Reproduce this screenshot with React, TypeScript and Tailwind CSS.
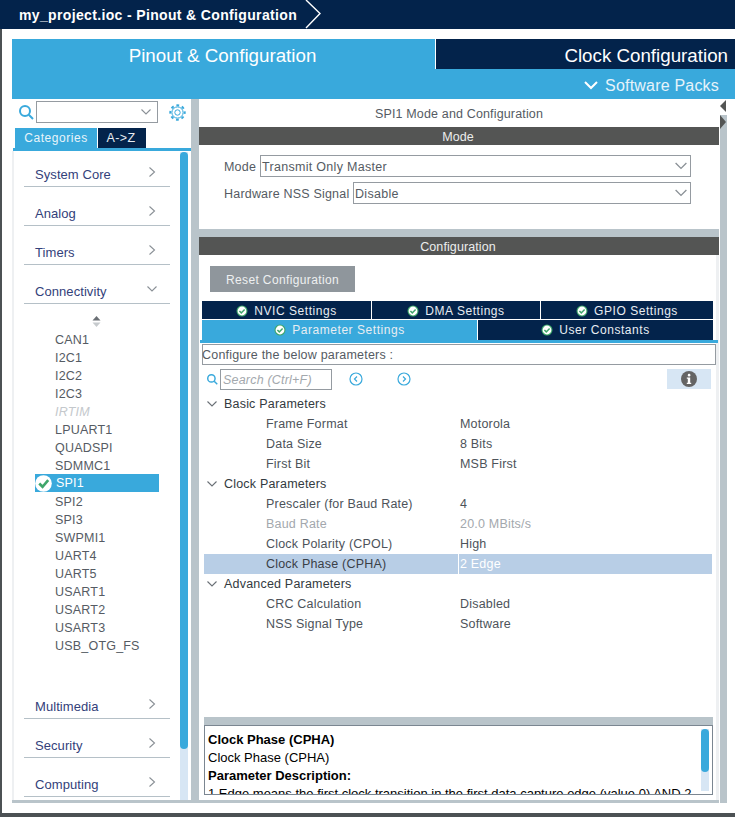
import React from "react";

const Chevron = ({ dir, size = 10, color = "#8a9096", width = 1.1 }: { dir: "right" | "down"; size?: number; color?: string; width?: number }) => (
  <svg width={size} height={size} viewBox="0 0 10 10" fill="none" stroke={color} strokeWidth={width}>
    {dir === "right" ? <path d="M2.5 0.5 L7.5 5 L2.5 9.5" /> : <path d="M0.5 2.5 L5 7 L9.5 2.5" />}
  </svg>
);

const Check = ({ size = 12 }: { size?: number }) => (
  <svg width={size} height={size} viewBox="0 0 12 12" className="shrink-0">
    <circle cx="6" cy="6" r="5.5" fill="#3fa66b" />
    <circle cx="6" cy="6" r="4.4" fill="#ffffff" />
    <path d="M3.4 6 L5.3 7.9 L8.6 4.4" fill="none" stroke="#3fa66b" strokeWidth="1.5" />
  </svg>
);

const BigCheck = () => (
  <svg width="17" height="17" viewBox="0 0 18 18" className="shrink-0">
    <circle cx="9" cy="9" r="8.8" fill="#ffffff" />
    <path d="M4.5 9 L8 12.5 L14 5.5" fill="none" stroke="#3fa66b" strokeWidth="2.8" />
  </svg>
);

const SearchIcon = ({ size = 15, width = 1.8 }: { size?: number; width?: number }) => (
  <svg width={size} height={size} viewBox="0 0 15 15" fill="none" stroke="#39a9dc" strokeWidth={width}>
    <circle cx="6" cy="6" r="5" />
    <path d="M9.8 9.8 L14 14" />
  </svg>
);

const Gear = () => (
  <svg width="17" height="17" viewBox="0 0 17 17" fill="none" stroke="#39a9dc">
    <circle cx="8.5" cy="8.5" r="2.7" strokeWidth="1" />
    <circle cx="8.5" cy="8.5" r="5.6" strokeWidth="1" />
    <circle cx="8.5" cy="8.5" r="7.2" strokeWidth="2" strokeDasharray="2.83 2.83" strokeDashoffset="1.41" />
  </svg>
);

const Category = ({ label, open }: { label: string; open?: boolean }) => (
  <div className="h-[39px] ml-[10px] w-[146px] border-b border-[#b5c0c7] flex items-end justify-between pl-[11px] pr-[13px] pb-[3px] text-[#33417a] text-[13px] tracking-[0.07px] leading-[16px]">
    <span>{label}</span>
    <span className="mb-[6px]">
      <Chevron dir={open ? "down" : "right"} />
    </span>
  </div>
);

const items = ["CAN1", "I2C1", "I2C2", "I2C3", "IRTIM", "LPUART1", "QUADSPI", "SDMMC1", "SPI1", "SPI2", "SPI3", "SWPMI1", "UART4", "UART5", "USART1", "USART2", "USART3", "USB_OTG_FS"];

const Item = ({ label }: { label: string }) => {
  if (label === "SPI1")
    return (
      <div className="h-[18px] ml-[21px] w-[124px] bg-[#39a9dc] text-white flex items-center text-[12.5px] tracking-[0.2px]">
        <span className="mr-[4px] flex"><BigCheck /></span>
        <span className="pt-px">SPI1</span>
      </div>
    );
  return (
    <div className={`h-[18px] ml-[41px] pt-[2px] flex items-center text-[12.5px] tracking-[0.2px] ${label === "IRTIM" ? "italic text-[#c4c8cc]" : "text-[#555b63]"}`}>
      {label}
    </div>
  );
};

const Tab = ({ label, active, className }: { label: string; active?: boolean; className: string }) => (
  <div className={`flex items-center justify-center gap-[6px] text-[12px] tracking-[0.55px] text-[#e8edf2] ${active ? "bg-[#39a9dc]" : "bg-[#03234b]"} ${className}`}>
    <Check />
    <span>{label}</span>
  </div>
);

const Section = ({ label }: { label: string }) => (
  <div className="h-[20px] flex items-center pl-[3px] text-[#333a40] text-[12.5px] tracking-[0.2px]">
    <span className="w-[12px] mr-[5px] flex"><Chevron dir="down" size={10} color="#6a7076" /></span>
    <span>{label}</span>
  </div>
);

const Row = ({ k, v, muted, selected }: { k: string; v: string; muted?: boolean; selected?: boolean }) => (
  <div className={`h-[20px] flex items-center text-[12.5px] tracking-[0.2px] ${selected ? "bg-[#b8cee6] text-[#3a4047]" : muted ? "text-[#a3a8ad]" : "text-[#4d535a]"}`}>
    <span className={`${selected ? "w-[254px]" : "w-[256px]"} pl-[62px] shrink-0 h-full flex items-center`}>{k}</span>
    <span className={`h-full flex items-center ${selected ? "text-white border-l border-white pl-[1px]" : ""}`}>{v}</span>
  </div>
);

const Select = ({ value, className }: { value: string; className: string }) => (
  <div className={`h-[22px] border border-[#959ba1] flex items-center justify-between pl-[1px] pr-[2px] text-[#555b63] text-[12.5px] tracking-[0.3px] ${className}`}>
    <span className="pt-[2px]">{value}</span>
    <span className="mr-[1px] flex"><Chevron dir="down" size={12} /></span>
  </div>
);

const Bar = ({ label }: { label: string }) => (
  <div className="h-[18px] bg-[#545554] text-[#eceded] text-[12.5px] tracking-[0.1px] flex items-center justify-center pt-[2px] pr-[2px] shrink-0">{label}</div>
);

export default function App() {
  return (
    <div className="relative w-[735px] h-[817px] overflow-hidden bg-white font-['Liberation_Sans',Arial,sans-serif] flex flex-col">
      {/* Breadcrumb */}
      <div className="h-[29px] bg-[#03234b] flex items-center shrink-0 pl-[19px] pt-px relative">
        <span className="text-white font-bold text-[14px] tracking-[0.35px]">my_project.ioc - Pinout &amp; Configuration</span>
        <svg width="18" height="30" viewBox="0 0 18 30" fill="none" stroke="#ffffff" strokeWidth="1.4" className="absolute left-[305px] top-[-1px]">
          <path d="M1 1 L15 14.5 L1 29" />
        </svg>
      </div>

      <div className="flex-1 flex min-h-0">
        <div className="w-[2px] bg-[#4c5154] shrink-0" />
        <div className="flex-1 flex flex-col pl-[10px] pt-[10px] pb-[10px] min-w-0">
          {/* Top tabs */}
          <div className="flex h-[30px] shrink-0">
            <div className="w-[423px] bg-[#39a9dc] text-white text-[18.75px] flex items-center justify-center pr-[2px] pt-[4px]">Pinout &amp; Configuration</div>
            <div className="w-px bg-white" />
            <div className="flex-1 bg-[#03234b] text-white text-[18.75px] flex items-center justify-end pr-[7px] pt-[4px]">Clock Configuration</div>
          </div>
          <div className="h-[30px] bg-[#39a9dc] shrink-0 flex items-center justify-end pr-[16px] pt-[3px] text-[#e6f3fa] text-[16px] tracking-[0.2px] gap-[7px]">
            <svg width="14" height="9" viewBox="0 0 14 9" fill="none" stroke="#ffffff" strokeWidth="2"><path d="M1 1 L7 7 L13 1" /></svg>
            <span>Software Packs</span>
          </div>

          {/* Body */}
          <div className="flex-1 flex min-h-0">
            {/* Sidebar */}
            <div className="w-[179px] shrink-0 flex flex-col border-b-[3px] border-[#b9c4ca]">
              <div className="h-[29px] shrink-0 flex items-start pt-[2px] pl-[7px]">
                <span className="mt-[4px] mr-[2px] flex"><SearchIcon size={15} width={2} /></span>
                <div className="w-[122px] h-[22px] border border-[#959ba1] flex items-center justify-end pr-[6px]"><Chevron dir="down" size={10} /></div>
                <span className="ml-[11px] mt-[3px] flex"><Gear /></span>
              </div>
              <div className="flex shrink-0 pl-[3px] h-[20px]">
                <div className="w-[82px] bg-[#39a9dc] text-[#e8f4fa] text-[12px] tracking-[0.55px] flex items-center justify-center">Categories</div>
                <div className="w-px bg-white" />
                <div className="w-[48px] bg-[#03234b] text-[#e8edf2] text-[12.5px] tracking-[0.4px] flex items-center justify-center pr-[2px]">A-&gt;Z</div>
              </div>
              <div className="h-[3px] bg-[#39a9dc] shrink-0 ml-[1px]" />
              <div className="flex-1 flex min-h-0 border-l-[2px] border-[#eef0f2] relative overflow-hidden">
                <div className="flex-1 min-w-0 -mt-[3px]">
                  <Category label="System Core" />
                  <Category label="Analog" />
                  <Category label="Timers" />
                  <Category label="Connectivity" open />
                  <div className="h-[26px] ml-[78px] flex items-end pb-[2px]">
                    <svg width="9" height="12" viewBox="0 0 9 12"><path d="M4.5 0 L8.5 4.5 H0.5 Z" fill="#6a6f74" /><path d="M4.5 11 L8.5 6.5 H0.5 Z" fill="#c6cacd" /></svg>
                  </div>
                  {items.map((i) => (
                    <Item key={i} label={i} />
                  ))}
                  <div className="h-[26px]" />
                  <Category label="Multimedia" />
                  <Category label="Security" />
                  <Category label="Computing" />
                </div>
                <div className="w-[8px] bg-[#d7e6f4] shrink-0 mr-[3px] mt-[1px]">
                  <div className="h-[597px] bg-[#39a9dc] rounded-[4px]" />
                </div>
              </div>
            </div>

            <div className="w-[8px] bg-[#b9c4ca] shrink-0" />

            {/* Main */}
            <div className="w-[520px] shrink-0 flex flex-col">
              <div className="h-[28px] shrink-0 flex items-center justify-center text-[#555b63] text-[12.5px] tracking-[0.15px] pt-[2px]">SPI1 Mode and Configuration</div>
              <Bar label="Mode" />
              <div className="h-[84px] shrink-0 pt-[10px] text-[#555b63] text-[12.5px] tracking-[0.2px]">
                <div className="flex items-center">
                  <span className="w-[61px] pl-[25px] pt-[2px] shrink-0">Mode</span>
                  <Select value="Transmit Only Master" className="w-[431px]" />
                </div>
                <div className="flex items-center mt-[5px]">
                  <span className="w-[154px] pl-[25px] pt-[2px] shrink-0 whitespace-nowrap">Hardware NSS Signal</span>
                  <Select value="Disable" className="w-[338px]" />
                </div>
              </div>
              <div className="h-[8px] bg-[#b9c4ca] shrink-0" />
              <Bar label="Configuration" />
              <div className="flex-1 min-h-0 flex flex-col border-r-[3px] border-[#eef0f2]">
                <div className="w-[145px] h-[26px] mt-[11px] ml-[11px] bg-[#8f969c] text-[#eef0f1] text-[12px] tracking-[0.37px] flex items-center justify-center pt-px shrink-0">Reset Configuration</div>
                <div className="flex mt-[9px] ml-[3px] w-[511px] h-[18px] shrink-0">
                  <Tab label="NVIC Settings" className="w-[169px] pt-px" />
                  <div className="w-px bg-white" />
                  <Tab label="DMA Settings" className="w-[168px] pt-px" />
                  <div className="w-px bg-white" />
                  <Tab label="GPIO Settings" className="flex-1 pt-px" />
                </div>
                <div className="flex mt-px ml-[3px] w-[511px] h-[20px] shrink-0">
                  <Tab label="Parameter Settings" active className="w-[275px]" />
                  <div className="w-px bg-white" />
                  <Tab label="User Constants" className="flex-1" />
                </div>
                <div className="h-[3px] bg-[#39a9dc] ml-[1px] w-[518px] shrink-0" />
                <div className="h-[21px] mt-px ml-[3px] w-[514px] border border-[#959ba1] text-[#555b63] text-[12.5px] tracking-[0.2px] flex items-center shrink-0"><span className="-ml-px pt-px">Configure the below parameters :</span></div>
                <div className="h-[22px] mt-[3px] ml-[8px] flex items-center shrink-0 relative">
                  <SearchIcon size={11} width={2} />
                  <div className="w-[112px] h-[21px] ml-[2px] border border-[#959ba1] text-[#a3a8ad] italic text-[12.5px] tracking-[0.2px] flex items-center pl-[2px] pt-[2px]">Search (Ctrl+F)</div>
                  <svg width="14" height="14" viewBox="0 0 14 14" fill="none" stroke="#39a9dc" className="ml-[17px]"><circle cx="7" cy="7" r="6" strokeWidth="1.2" /><path d="M8 4.5 L5.5 7 L8 9.5" strokeWidth="1.2" /></svg>
                  <svg width="14" height="14" viewBox="0 0 14 14" fill="none" stroke="#39a9dc" className="ml-[34px]"><circle cx="7" cy="7" r="6" strokeWidth="1.2" /><path d="M6 4.5 L8.5 7 L6 9.5" strokeWidth="1.2" /></svg>
                  <div className="ml-[256px] w-[44px] h-[20px] bg-[#d7e6f4] flex items-center justify-center">
                    <svg width="16" height="16" viewBox="0 0 16 16"><circle cx="8" cy="8" r="8" fill="#646464" /><rect x="6.8" y="2.8" width="2.6" height="2.6" rx="1.2" fill="#fff" /><path d="M5.8 6.6 H9.2 V11.8 H10.2 V13 H5.8 V11.8 H6.8 V7.8 H5.8 Z" fill="#fff" /></svg>
                  </div>
                </div>
                <div className="mt-[4px] ml-[5px] w-[508px] shrink-0">
                  <Section label="Basic Parameters" />
                  <Row k="Frame Format" v="Motorola" />
                  <Row k="Data Size" v="8 Bits" />
                  <Row k="First Bit" v="MSB First" />
                  <Section label="Clock Parameters" />
                  <Row k="Prescaler (for Baud Rate)" v="4" />
                  <Row k="Baud Rate" v="20.0 MBits/s" muted />
                  <Row k="Clock Polarity (CPOL)" v="High" />
                  <Row k="Clock Phase (CPHA)" v="2 Edge" selected />
                  <Section label="Advanced Parameters" />
                  <Row k="CRC Calculation" v="Disabled" />
                  <Row k="NSS Signal Type" v="Software" />
                </div>
                <div className="flex-1" />
                <div className="h-[8px] ml-[5px] w-[509px] bg-[#b9c4ca] shrink-0" />
                <div className="h-[70px] ml-[5px] w-[509px] border border-[#7b8691] shrink-0 overflow-hidden flex text-black text-[13px] leading-[18px]">
                  <div className="flex-1 pl-[3px] pt-[5px] min-w-0 overflow-hidden">
                    <div className="font-bold">Clock Phase (CPHA)</div>
                    <div>Clock Phase (CPHA)</div>
                    <div className="font-bold">Parameter Description:</div>
                    <div className="whitespace-nowrap">1 Edge means the first clock transition in the first data capture edge (value 0) AND 2</div>
                  </div>
                  <div className="w-[8px] mr-[3px] mt-[3px] mb-[3px] bg-[#d7e6f4] shrink-0"><div className="h-[43px] bg-[#39a9dc] rounded-[4px]" /></div>
                </div>
                <div className="h-[5px] shrink-0" />
              </div>
              <div className="h-[3px] bg-[#b9c4ca] shrink-0" />
            </div>

            {/* Right rail */}
            <div className="w-[8px] shrink-0 relative flex flex-col">
              <div className="h-[16px] shrink-0" />
              <div className="flex-1 bg-[#b9c4ca] ml-px" />
              <svg width="8" height="32" viewBox="0 0 8 32" className="absolute left-0 top-0">
                <path d="M7 1 V13 L1 7 Z" fill="#545554" />
                <path d="M1 16 V30 L7 23 Z" fill="#545554" />
              </svg>
            </div>
          </div>
        </div>
      </div>
      <div className="h-[4px] bg-[#4c5154] shrink-0" />
    </div>
  );
}
